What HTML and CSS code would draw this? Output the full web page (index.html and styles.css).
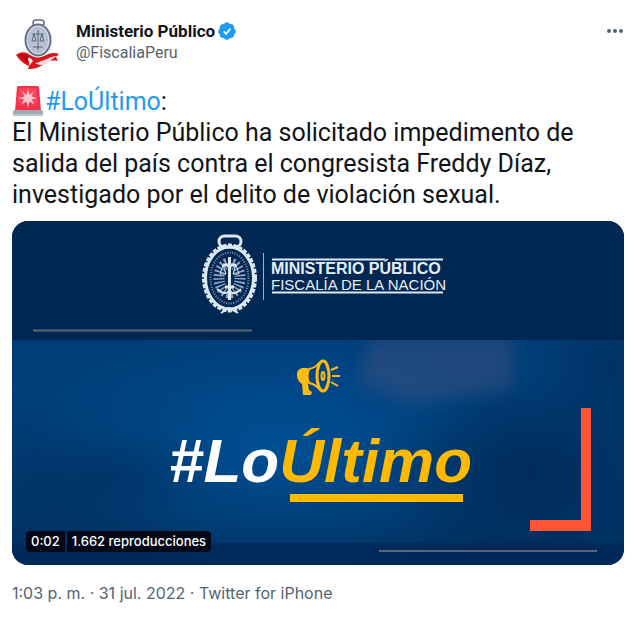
FILE: index.html
```html
<!DOCTYPE html>
<html lang="es">
<head>
<meta charset="utf-8">
<meta name="viewport" content="width=device-width, initial-scale=1">
<title>Ministerio Público</title>
<link rel="stylesheet" href="styles.css">
</head>
<body>
<article class="tweet">
  <header class="head">
    <svg class="avatar" viewBox="0 0 50 54" aria-hidden="true">
      <rect x="19" y="4" width="11" height="6" rx="3" fill="none" stroke="#626b7d" stroke-width="1.5"/>
      <ellipse cx="24" cy="24" rx="12.500" ry="15.500" fill="#d4dae5" stroke="#667087" stroke-width="2"/>
      <ellipse cx="24" cy="24" rx="9.500" ry="12.500" fill="#b9c3d4" stroke="#8791a7" stroke-width="1" stroke-dasharray="1 1"/>
      <path d="M24 14v20M18 18h12M20 18l-2 7h4zM28 18l-2 7h4zM19 31h10" fill="none" stroke="#59647e" stroke-width="1"/>
      <path d="M2 39c5-4 10-3 14 0 5 3 9 3 14 1 5-3 10-4 15-2l-3 3 2 4c-6-1-9 0-13 2-5 4-9 6-17 6l1-3C10 48 6 45 2 39z" fill="#d8161f"/>
      <path d="M27 45c6-1 9-5 16-5-4 2-6 5-11 8-4 2-8 1-11-1 3 0 4-1 6-2z" fill="#f8d9d9"/>
      <path d="M12 41c4 5 3 7 3 9l4-5c-2-3-4-4-7-4z" fill="#fbe3e2"/>
      <path d="M5 39c4-1 8 0 11 2-3 1-3 4 0 6-4-1-8-4-11-8z" fill="#b80712"/>
    </svg>
    <div class="who">
      <a class="name" href="#perfil">Ministerio Público
        <svg class="check" viewBox="0 0 24 24" role="img" aria-label="Cuenta verificada"><path fill="#1d9bf0" d="M22.500 12.500c0-1.580-.875-2.950-2.148-3.600.154-.435.238-.905.238-1.400 0-2.210-1.710-3.998-3.818-3.998-.470 0-.920.084-1.336.250C14.818 2.415 13.510 1.500 12 1.500s-2.816.917-3.437 2.250c-.415-.165-.866-.250-1.336-.250-2.110 0-3.818 1.790-3.818 4 0 .494.083.964.237 1.400-1.272.650-2.147 2.018-2.147 3.600 0 1.495.782 2.798 1.942 3.486-.020.170-.032.340-.032.514 0 2.210 1.708 4 3.818 4 .470 0 .920-.086 1.335-.250.620 1.334 1.926 2.250 3.437 2.250 1.512 0 2.818-.916 3.437-2.250.415.163.865.248 1.336.248 2.110 0 3.818-1.790 3.818-4 0-.174-.012-.344-.033-.513 1.158-.687 1.943-1.990 1.943-3.484z"/><path d="M8 12.500l3 3 5-6.500" fill="none" stroke="#fff" stroke-width="2"/></svg>
      </a>
      <a class="handle" href="#perfil">@FiscaliaPeru</a>
    </div>
    <button class="more" type="button" aria-label="Más opciones">
      <svg viewBox="0 0 18 6" aria-hidden="true"><circle cx="3" cy="3" r="2"/><circle cx="9" cy="3" r="2"/><circle cx="15" cy="3" r="2"/></svg>
    </button>
  </header>

  <p class="text"><svg class="siren" viewBox="0 0 30 30" aria-hidden="true">
      <path d="M4 1Q4 0 6 0H24Q26 0 26 1L28 25H2z" fill="#f5304c"/>
      <path d="M6 2h17l2 15H4z" fill="#ff5367" opacity=".5"/>
      <path d="M15 3l1.500 6 4.500-4-2.500 5.500 6 1.500-6 1.500L22 19l-5.500-3.500L15 22l-1.500-6.500L8 19l3-5.500-6-1.500 6.500-1.500L9 5l4.500 4z" fill="#ffc5cc"/>
      <path d="M2 24h26q2 0 2 2v4H0v-4q0-2 2-2z" fill="#9aaab4"/><path d="M0 28h30v2H0z" fill="#b9c6ce"/>
    </svg><a class="tag" href="#LoUltimo">#LoÚltimo</a>:<br>El Ministerio Público ha solicitado impedimento de salida del país contra el congresista Freddy Díaz, investigado por el delito de violación sexual.</p>

  <div class="video">
    <svg class="poster" viewBox="0 0 612 344">
      <defs>
        <linearGradient id="base" x1="0" y1="0" x2="0" y2="1"><stop offset="0" stop-color="#003a6e"/><stop offset=".5" stop-color="#003f7a"/><stop offset="1" stop-color="#00305f"/></linearGradient>
        <radialGradient id="glow"><stop offset="0" stop-color="#004f93"/><stop offset="1" stop-color="#004f93" stop-opacity="0"/></radialGradient>
        <radialGradient id="dark"><stop offset="0" stop-color="#002c5b"/><stop offset="1" stop-color="#002c5b" stop-opacity="0"/></radialGradient>
        <filter id="soft" x="-30%" y="-60%" width="160%" height="220%"><feGaussianBlur stdDeviation="9"/></filter>
      </defs>
      <rect width="612" height="344" fill="url(#base)"/>
      <ellipse cx="270" cy="225" rx="250" ry="130" fill="url(#glow)"/>
      <ellipse cx="520" cy="250" rx="150" ry="100" fill="url(#dark)"/>
      <ellipse cx="100" cy="255" rx="110" ry="50" fill="url(#dark)" opacity=".5"/>
      <ellipse cx="600" cy="150" rx="80" ry="90" fill="url(#dark)" opacity=".7"/>
      <path d="M360 115H500V168L455 174 400 182 345 164z" fill="#2f4d80" opacity=".7" filter="url(#soft)"/>
      <rect y="322" width="612" height="22" fill="#002857" opacity=".8"/>
      <rect width="612" height="119" fill="#002853"/>
      <path d="M21 109.500H240M367 330H585" stroke="#5b6475" stroke-width="2"/>

      <g fill="none" stroke="#dce8f4">
        <rect x="207" y="15" width="22" height="11" rx="5.500" stroke-width="3"/>
        <ellipse cx="217.500" cy="57" rx="24" ry="31" stroke-width="3"/>
        <ellipse cx="217.500" cy="57" rx="26" ry="33" stroke-width="3" stroke-dasharray="4 1.500"/>
        <ellipse cx="217.500" cy="57" rx="19" ry="25.500" stroke="#8197b6" stroke-width="2" stroke-dasharray="1 1.500"/>
        <ellipse cx="217.500" cy="57" rx="10.500" ry="15" stroke="#91a7c3" stroke-width="11" stroke-dasharray="1.500 2"/>
        <path d="M217.500 36v43M211 44h13M213 66h9" stroke-width="3"/>
        <path d="M211 44l-3 9h6zM224 44l-3 9h6z" stroke-width="1"/>
        <path d="M205 68q8 7 12 2 5 5 12-2M209 92l8-5 9 5" stroke-width="2"/>
        <path d="M251.500 32V79" stroke="#9cb0ca" stroke-width="1"/>
        <path d="M260 38.500H373M383 38.500H431M260 71.500H431" stroke-width="2"/>
      </g>
      <text class="brand bold" x="259" y="53">MINISTERIO PÚBLICO</text>
      <text class="brand light" x="259" y="69">FISCALÍA DE LA NACIÓN</text>

      <g fill="none" stroke="#ffb914" stroke-width="3">
        <ellipse cx="311" cy="155" rx="6" ry="15"/>
        <ellipse cx="311" cy="155" rx="1.500" ry="4" stroke-width="2"/>
        <path d="M307 142Q303 147 297 148M307 168Q303 163 297 162" stroke-width="2"/>
        <path d="M319 149l7-3M320 155h8M319 161l7 4" stroke-width="2"/>
        <path d="M299 147h-9q-6 2-5 8 1 6 5 8h9q-5-8 0-16z" fill="#ffb914" stroke="none"/>
        <path d="M290 163h6l1 6 3 2-1 3h-8z" fill="#ffb914" stroke="none"/>
      </g>
      <text class="headline" x="157" y="261"><tspan fill="#fff">#Lo</tspan><tspan fill="#ffb900">Último</tspan></text>
      <rect x="278" y="273" width="173" height="8" fill="#ffb900"/>
      <path d="M569 187h10v123h-61v-11h51z" fill="#ff5534"/>
    </svg>
    <div class="stats"><span>0:02</span><span>1.662 reproducciones</span></div>
  </div>

  <footer class="meta"><a href="#fecha">1:03 p. m. · 31 jul. 2022</a> · <a href="#app">Twitter for iPhone</a></footer>
</article>
</body>
</html>
```
FILE: styles.css
```css
* { box-sizing: border-box; }
body {
  margin: 0;
  background: #fff;
  color: #0f1419;
  font-family: Roboto, "Liberation Sans", sans-serif;
}
a { color: inherit; text-decoration: none; }
.tweet { padding: 16px 16px 12px 12px; }
.head { display: flex; align-items: flex-start; gap: 12px; height: 54px; }
.avatar { width: 50px; height: 54px; margin-left: 2px; flex: none; }
.who { display: flex; flex-direction: column; flex: 1; padding-top: 4px; font-size: 16px; line-height: 22px; }
.name { display: flex; align-items: center; gap: 2px; font-size: 17px; font-weight: 700; }
.check { width: 20px; height: 20px; }
.handle { color: #536471; }
.more { display: flex; padding: 12px 0; border: 0; background: none; cursor: pointer; }
.more svg { width: 18px; height: 6px; fill: #536471; }
.text { margin: 16px 0 11px; font-size: 25px; line-height: 31px; }
.siren { width: 30px; height: 30px; margin: 0 2px 0 1px; vertical-align: -6px; }
.tag { color: #1d9bf0; }
.video { position: relative; overflow: hidden; border-radius: 16px; }
.poster { display: block; width: 100%; height: auto; }
.brand { fill: #e6eff8; font-family: "Liberation Sans", sans-serif; }
.bold { font-size: 16px; font-weight: 700; }
.light { font-size: 15px; }
.headline { font: italic 700 62px "Liberation Sans", sans-serif; }
.stats {
  position: absolute;
  left: 14px;
  bottom: 13px;
  display: flex;
  gap: 2px;
  overflow: hidden;
  border-radius: 4px;
  color: #fff;
  font-family: Inter, "Liberation Sans", sans-serif;
  font-size: 13px;
  font-weight: 500;
  line-height: 21px;
}
.stats span { padding: 0 5px; background: #020817; }
.meta {
  margin-top: 17px;
  color: #536471;
  font-family: Inter, "Liberation Sans", sans-serif;
  font-size: 16px;
  line-height: 22px;
}
```
